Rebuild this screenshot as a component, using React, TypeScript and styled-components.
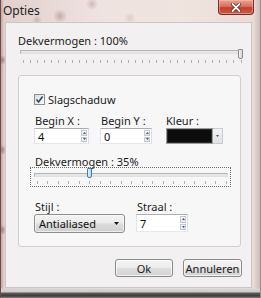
import React from "react";
import styled, { createGlobalStyle } from "styled-components";

const Global = createGlobalStyle`
  html, body { margin: 0; padding: 0; }
  body {
    width: 261px; height: 298px; overflow: hidden;
    font-family: "Noto Sans", "Open Sans", sans-serif;
    font-size: 11px; color: #1b1b1b;
  }
`;

const Window = styled.div`
  position: relative;
  width: 261px;
  height: 298px;
  box-sizing: border-box;
  display: flex;
  flex-direction: column;
  background:
    radial-gradient(circle at 60px 16px, rgba(150, 110, 110, 0.45) 0, rgba(150, 110, 110, 0) 7px),
    radial-gradient(circle at 92px 4px, rgba(150, 110, 110, 0.35) 0, rgba(150, 110, 110, 0) 6px),
    radial-gradient(circle at 37px 20px, rgba(150, 110, 110, 0.35) 0, rgba(150, 110, 110, 0) 5px),
    radial-gradient(circle at 130px 18px, rgba(150, 110, 110, 0.2) 0, rgba(150, 110, 110, 0) 6px),
    radial-gradient(circle at 2px 60px, rgba(120, 70, 70, 0.5) 0, rgba(120, 70, 70, 0) 5px),
    radial-gradient(circle at 2px 150px, rgba(120, 70, 70, 0.5) 0, rgba(120, 70, 70, 0) 5px),
    radial-gradient(circle at 2px 230px, rgba(120, 70, 70, 0.5) 0, rgba(120, 70, 70, 0) 5px),
    linear-gradient(to bottom, rgba(0, 0, 0, 0) 288px, #d9d5d4 289px, #cfcbca 292px, #5d5b5b 293px, #3c3a3a 296px, #8a8686 298px),
    linear-gradient(to right, #b99894 0px, #e2d0cd 4px, #efe3e1 40%, #f0e4df 70%, #e9dcd6 97%, #c8b8b4 100%);
  box-shadow: inset 1px 0 0 #6b4c4a, inset -1px 0 0 #9a8a88;
`;

const TitleBar = styled.div`
  height: 22px;
  display: flex;
  justify-content: space-between;
  align-items: flex-start;
  padding-left: 3px;
`;

const Title = styled.div`
  font-size: 12px;
  line-height: 15px;
  margin-top: 3px;
  color: #222;
`;

const CloseButton = styled.div`
  width: 36px;
  height: 15px;
  margin-right: 7px;
  box-sizing: border-box;
  border: 1px solid #7f2a22;
  border-top: none;
  border-radius: 0 0 4px 4px;
  background: linear-gradient(to bottom, #e8a494 0%, #d6705e 45%, #c2402e 55%, #cf5b43 100%);
  box-shadow: inset 0 0 0 1px rgba(255, 200, 190, 0.45);
  display: flex;
  align-items: center;
  justify-content: center;
`;

const Client = styled.div`
  margin: 0 9px 0 5px;
  height: 266px;
  box-sizing: border-box;
  border: 1px solid #cbc6c5;
  background: #f2f0f0;
  padding: 12px 9px 0 12px;
  display: flex;
  flex-direction: column;
`;

const Label = styled.div<{ $lh?: number; $indent?: number }>`
  font-size: 11px;
  line-height: ${(p) => p.$lh ?? 12}px;
  padding-left: ${(p) => p.$indent ?? 0}px;
  white-space: nowrap;
  color: #1b1b1b;
`;

const SliderBox = styled.div<{ $w: number; $h: number; $focus?: boolean }>`
  position: relative;
  width: ${(p) => p.$w}px;
  height: ${(p) => p.$h}px;
  box-sizing: border-box;
  border: 1px ${(p) => (p.$focus ? "dotted #6a6a6a" : "solid transparent")};
`;

const Track = styled.div<{ $left: number; $top: number; $w: number }>`
  position: absolute;
  left: ${(p) => p.$left}px;
  top: ${(p) => p.$top}px;
  width: ${(p) => p.$w}px;
  height: 4px;
  box-sizing: border-box;
  border: 1px solid #b4b4b4;
  border-bottom-color: #e0e0e0;
  border-right-color: #dcdcdc;
  background: #e6e6e6;
`;

const Thumb = styled.div<{ $top: number; $active?: boolean }>`
  position: absolute;
  top: ${(p) => p.$top}px;
  width: 5px;
  height: 10px;
  box-sizing: border-box;
  border: 1px solid ${(p) => (p.$active ? "#3c7fb1" : "#8a8a8a")};
  border-radius: 1px 1px 2px 2px;
  background: ${(p) =>
    p.$active
      ? "linear-gradient(to right, #e5f4fc, #a9d9f2)"
      : "linear-gradient(to right, #f4f4f4, #d4d4d4)"};
`;

const Ticks = styled.svg<{ $left: number; $top: number }>`
  position: absolute;
  left: ${(p) => p.$left}px;
  top: ${(p) => p.$top}px;
`;

type SliderProps = {
  w: number;
  h: number;
  focus?: boolean;
  trackLeft: number;
  trackTop: number;
  trackW: number;
  thumbTop: number;
  tickTop: number;
  ticks: number;
  min: number;
  max: number;
  value: number;
  active?: boolean;
};

function Slider(p: SliderProps) {
  const travel = p.trackW - 5;
  const thumbLeft = p.trackLeft + Math.round(((p.value - p.min) / (p.max - p.min)) * travel);
  const xs: number[] = [];
  for (let i = 0; i < p.ticks; i++) {
    xs.push(2.5 + (i * travel) / (p.ticks - 1));
  }
  return (
    <SliderBox $w={p.w} $h={p.h} $focus={p.focus}>
      <Track $left={p.trackLeft} $top={p.trackTop} $w={p.trackW} />
      <Ticks $left={p.trackLeft} $top={p.tickTop} width={p.trackW} height={3}>
        {xs.map((x, i) => (
          <line key={i} x1={Math.round(x) + 0.5} x2={Math.round(x) + 0.5} y1={0} y2={3} stroke="#b0b0b0" strokeWidth={1} />
        ))}
      </Ticks>
      <Thumb $top={p.thumbTop} $active={p.active} style={{ left: thumbLeft }} />
    </SliderBox>
  );
}

const Group = styled.div`
  margin-top: 12px;
  margin-right: 1px;
  height: 172px;
  box-sizing: border-box;
  border: 1px solid #d2cfcf;
  border-radius: 3px;
  background: #f8f7f7;
  padding: 18px 0 0 11px;
  display: flex;
  flex-direction: column;
`;

const CheckRow = styled.div`
  margin-left: 4px;
  height: 11px;
  display: flex;
  align-items: center;
  gap: 3px;
`;

const CheckBox = styled.div`
  width: 11px;
  height: 11px;
  box-sizing: border-box;
  border: 1px solid #8e8f8f;
  background: linear-gradient(135deg, #dcdcdc, #fbfbfb);
  display: flex;
  align-items: center;
  justify-content: center;
`;

const FieldGrid = styled.div<{ $cols: string; $mt: number }>`
  margin-left: 4px;
  margin-top: ${(p) => p.$mt}px;
  display: grid;
  grid-template-columns: ${(p) => p.$cols};
  column-gap: 11px;
  row-gap: 1px;
  align-items: start;
`;

const TextBox = styled.div<{ $w: number; $h: number }>`
  position: relative;
  width: ${(p) => p.$w}px;
  height: ${(p) => p.$h}px;
  box-sizing: border-box;
  border: 1px solid;
  border-color: #abadb3 #dbdfe6 #e3e9ef #e2e3ea;
  background: #fff;
  padding-left: 3px;
  display: flex;
  align-items: center;
  font-size: 11px;
  color: #111;
`;

const Spin = styled.div`
  position: absolute;
  right: 1px;
  top: 1px;
  bottom: 1px;
  width: 6px;
  display: flex;
  flex-direction: column;
  gap: 1px;
`;

const SpinHalf = styled.div`
  flex: 1;
  box-sizing: border-box;
  border: 1px solid #c3c9d3;
  background: linear-gradient(to bottom, #f6f7f9, #e3e7ee);
  display: flex;
  align-items: center;
  justify-content: center;
`;

const ColorPick = styled.div`
  display: flex;
  height: 16px;
`;

const ColorSwatch = styled.div`
  width: 47px;
  height: 16px;
  box-sizing: border-box;
  border: 1px solid #9c9c9c;
  background: #0c0c0c;
  box-shadow: inset 0 0 0 1px #2a2a2a;
`;

const ColorArrow = styled.div`
  width: 10px;
  height: 16px;
  box-sizing: border-box;
  border: 1px solid #c8cbd2;
  border-left: none;
  background: linear-gradient(to bottom, #f4f4f6, #dfe1e6);
  display: flex;
  align-items: center;
  justify-content: center;
`;

const Combo = styled.div`
  width: 91px;
  height: 19px;
  box-sizing: border-box;
  border: 1px solid #8e8e8e;
  border-radius: 3px;
  background: linear-gradient(to bottom, #f3f3f3 0%, #ebebeb 48%, #dcdcdc 52%, #d0d0d0 100%);
  box-shadow: inset 0 0 0 1px rgba(255, 255, 255, 0.6);
  display: flex;
  align-items: center;
  justify-content: space-between;
  padding: 0 5px 0 4px;
  font-size: 11px;
  color: #111;
`;

const ButtonRow = styled.div`
  margin-top: 12px;
  display: flex;
  justify-content: flex-end;
  gap: 10px;
`;

const Button = styled.div<{ $w: number }>`
  width: ${(p) => p.$w}px;
  height: 18px;
  box-sizing: border-box;
  border: 1px solid #8a8a8a;
  border-radius: 3px;
  background: linear-gradient(to bottom, #f4f4f4 0%, #ececec 48%, #dedede 52%, #d2d2d2 100%);
  box-shadow: inset 0 0 0 1px rgba(255, 255, 255, 0.7);
  display: flex;
  align-items: center;
  justify-content: center;
  font-size: 11px;
  color: #1b1b1b;
`;

const Arrow = ({ up, size = 3, color = "#4d5664" }: { up?: boolean; size?: number; color?: string }) => (
  <svg width={size * 2 - 1} height={size} viewBox={`0 0 ${size * 2 - 1} ${size}`}>
    <polygon
      points={up ? `0,${size} ${size * 2 - 1},${size} ${size - 0.5},0` : `0,0 ${size * 2 - 1},0 ${size - 0.5},${size}`}
      fill={color}
    />
  </svg>
);

const SpinBox = ({ w, h, value }: { w: number; h: number; value: string }) => (
  <TextBox $w={w} $h={h}>
    {value}
    <Spin>
      <SpinHalf>
        <Arrow up size={2} />
      </SpinHalf>
      <SpinHalf>
        <Arrow size={2} />
      </SpinHalf>
    </Spin>
  </TextBox>
);

export default function App() {
  return (
    <>
      <Global />
      <Window>
        <TitleBar>
          <Title>Opties</Title>
          <CloseButton>
            <svg width="10" height="9" viewBox="0 0 10 9">
              <path d="M1.5 1 L8.5 8 M8.5 1 L1.5 8" stroke="#5a1a12" strokeWidth="3.2" strokeLinecap="round" />
              <path d="M1.5 1 L8.5 8 M8.5 1 L1.5 8" stroke="#ffffff" strokeWidth="1.8" strokeLinecap="round" />
            </svg>
          </CloseButton>
        </TitleBar>
        <Client>
          <Label>Dekvermogen : 100%</Label>
          <Slider
            w={224}
            h={16}
            trackLeft={1}
            trackTop={2}
            trackW={223}
            thumbTop={1}
            tickTop={12}
            ticks={32}
            min={10}
            max={100}
            value={100}
          />
          <Group>
            <CheckRow>
              <CheckBox>
                <svg width="9" height="9" viewBox="0 0 9 9">
                  <path d="M1.5 4.5 L3.6 7 L7.6 1.5" stroke="#2a4a70" strokeWidth="1.6" fill="none" />
                </svg>
              </CheckBox>
              <Label>Slagschaduw</Label>
            </CheckRow>
            <FieldGrid $cols="55px 55px 57px" $mt={10}>
              <Label $indent={1}>Begin X :</Label>
              <Label $indent={1}>Begin Y :</Label>
              <Label>Kleur :</Label>
              <SpinBox w={55} h={16} value="4" />
              <SpinBox w={52} h={16} value="0" />
              <ColorPick>
                <ColorSwatch />
                <ColorArrow>
                  <Arrow size={2} color="#555" />
                </ColorArrow>
              </ColorPick>
            </FieldGrid>
            <Label $lh={11} $indent={5} style={{ marginTop: 12 }}>
              Dekvermogen : 35%
            </Label>
            <Slider
              w={201}
              h={20}
              focus
              trackLeft={3}
              trackTop={5}
              trackW={194}
              thumbTop={0}
              tickTop={13}
              ticks={19}
              min={10}
              max={100}
              value={35}
              active
            />
            <FieldGrid $cols="91px 52px" $mt={14}>
              <Label $indent={1}>Stijl :</Label>
              <Label $indent={1}>Straal :</Label>
              <Combo>
                <span>Antialiased</span>
                <Arrow size={3} color="#111" />
              </Combo>
              <SpinBox w={52} h={18} value="7" />
            </FieldGrid>
          </Group>
          <ButtonRow>
            <Button $w={58}>Ok</Button>
            <Button $w={59}>Annuleren</Button>
          </ButtonRow>
        </Client>
      </Window>
    </>
  );
}
